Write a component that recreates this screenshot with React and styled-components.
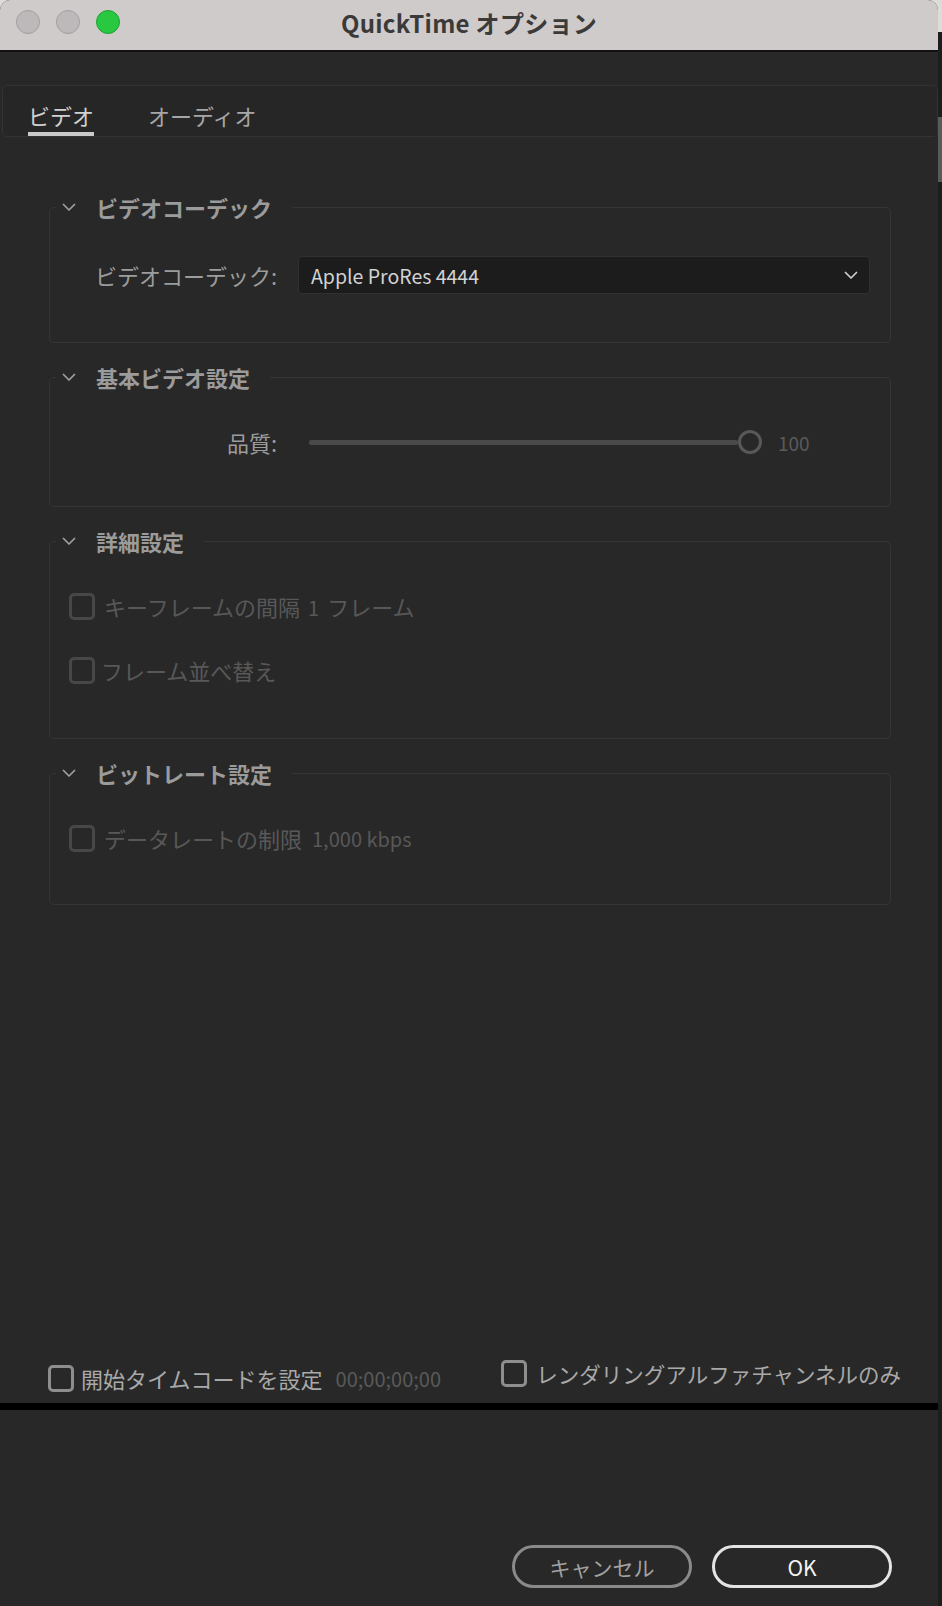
import React from 'react';
import styled, { createGlobalStyle } from 'styled-components';

const GlobalStyle = createGlobalStyle`
  html, body {
    margin: 0;
    padding: 0;
  }
  body {
    background: linear-gradient(to bottom, #dedbdb 0, #dedbdb 32px, #1d1d1d 32px);
    font-family: "Noto Sans CJK JP", "Noto Sans", sans-serif;
  }
`;

const Screen = styled.div`
  display: flex;
  height: 100vh;
`;

const Window = styled.div`
  width: 938px;
  flex: none;
  display: flex;
  flex-direction: column;
  background: #282828;
  border-radius: 10px 10px 0 0;
  overflow: hidden;
`;

const EdgeStrip = styled.div`
  flex: 1;
  display: flex;
  flex-direction: column;
`;

const EdgeMark = styled.div`
  margin-top: 117px;
  height: 65px;
  background: #5a5a5a;
`;

/* title bar */
const TitleBar = styled.div`
  height: 52px;
  flex: none;
  box-sizing: border-box;
  padding: 0 16px 6px 16px;
  display: grid;
  grid-template-columns: 1fr auto 1fr;
  align-items: center;
  background: #cfcbcb;
  border-bottom: 2px solid #121212;
`;

const Lights = styled.div`
  display: flex;
  gap: 16px;
`;

const Light = styled.span`
  width: 24px;
  height: 24px;
  box-sizing: border-box;
  border-radius: 50%;
  background: ${(p) => (p.$on ? '#28c840' : '#bdb9ba')};
  border: 1px solid ${(p) => (p.$on ? '#1fa133' : '#a29e9f')};
`;

const Title = styled.div`
  font-size: 24px;
  font-weight: 700;
  color: #3c3939;
  letter-spacing: 0.3px;
`;

/* tabs */
const Main = styled.div`
  flex: 1;
  display: flex;
  flex-direction: column;
`;

const TabBar = styled.div`
  margin: 33px 0 0 2px;
  padding-left: 25px;
  display: flex;
  gap: 54px;
  border: 1px solid #333;
  border-radius: 5px;
  background: #262626;
`;

const Tab = styled.div`
  padding: 14px 0 2px;
  line-height: 30px;
  font-size: 22px;
  color: ${(p) => (p.$active ? '#d0d0d0' : '#a6a6a6')};
  border-bottom: 4px solid ${(p) => (p.$active ? '#c9c9c9' : 'transparent')};
`;

/* sections */
const Content = styled.div`
  padding: 58px 47px 0 49px;
  display: flex;
  flex-direction: column;
  gap: 22px;
`;

const Section = styled.fieldset`
  margin: 0;
  padding: 0;
  min-inline-size: 0;
  border: 1px solid #353535;
  border-radius: 5px;
`;

const Legend = styled.legend`
  margin-left: 6px;
  padding: 0 20px 0 6px;
  display: flex;
  align-items: center;
  gap: 20px;
  line-height: 24px;
  font-size: 22px;
  font-weight: 700;
  color: #9b9b9b;
`;

const SectionBody = styled.div`
  padding: 37px 20px ${(p) => p.$pb || 48}px 19px;
  display: flex;
  flex-direction: column;
  gap: 32px;
`;

const FieldRow = styled.div`
  display: grid;
  grid-template-columns: 208px 1fr;
  column-gap: 21px;
  align-items: center;
  min-height: ${(p) => p.$h || 32}px;
`;

const Label = styled.div`
  text-align: right;
  font-size: 22px;
  color: #9c9c9c;
`;

const Select = styled.div`
  height: 38px;
  box-sizing: border-box;
  padding: 0 11px 0 12px;
  display: flex;
  align-items: center;
  justify-content: space-between;
  background: #1c1c1c;
  border: 1px solid #303030;
  border-radius: 4px;
  font-size: 19.5px;
  color: #d2d2d2;
`;

const Slider = styled.div`
  display: flex;
  align-items: center;
`;

const Track = styled.div`
  margin-left: 11px;
  width: 429px;
  height: 5px;
  border-radius: 2px;
  background: #4a4a4a;
`;

const Thumb = styled.div`
  width: 24px;
  height: 24px;
  box-sizing: border-box;
  border-radius: 50%;
  border: 3px solid #585858;
  background: #282828;
`;

const SliderValue = styled.span`
  margin-left: 16px;
  font-size: 19px;
  color: #5a5a5a;
`;

const CheckRow = styled.label`
  display: flex;
  align-items: center;
  gap: ${(p) => p.$gap || 9}px;
  min-height: 32px;
  font-size: ${(p) => p.$size || 22}px;
  color: ${(p) => (p.$disabled ? '#585858' : '#a9a9a9')};
`;

const Box = styled.span`
  width: 26px;
  height: 27px;
  flex: none;
  box-sizing: border-box;
  border-radius: 5px;
  border: 3px solid ${(p) => (p.$disabled ? '#474747' : '#8e8e8e')};
`;

const Num = styled.span`
  margin: 0 ${(p) => p.$mr || 0}px 0 ${(p) => p.$ml || 0}px;
  font-size: 20px;
  color: ${(p) => p.$color || 'inherit'};
`;

/* bottom */
const OptionsRow = styled.div`
  padding: 0 37px 9px 48px;
  display: flex;
  justify-content: space-between;
  align-items: flex-start;
`;

const LeftOption = styled.div`
  margin-top: 5px;
`;

const BlackBar = styled.div`
  height: 7px;
  flex: none;
  background: #000;
`;

const Footer = styled.div`
  height: 196px;
  flex: none;
  box-sizing: border-box;
  padding: 0 46px 18px 0;
  display: flex;
  justify-content: flex-end;
  align-items: flex-end;
  gap: 20px;
`;

const Button = styled.button`
  width: 180px;
  height: 43px;
  border-radius: 22px;
  background: transparent;
  font-family: inherit;
  font-size: 21px;
  font-weight: 400;
  color: ${(p) => (p.$primary ? '#f4f4f4' : '#a2a2a2')};
  border: 3px solid ${(p) => (p.$primary ? '#e4e4e4' : '#8a8a8a')};
  padding: 0;
`;

const Chevron = ({ color = '#a0a0a0' }) => (
  <svg width="14" height="9" viewBox="0 0 14 9" fill="none">
    <path d="M1.5 1.5 L7 7 L12.5 1.5" stroke={color} strokeWidth="1.7" strokeLinecap="round" strokeLinejoin="round" />
  </svg>
);

const Check = ({ disabled, gap, size, children }) => (
  <CheckRow $disabled={disabled} $gap={gap} $size={size}>
    <Box $disabled={disabled} />
    {children}
  </CheckRow>
);

export default function App() {
  return (
    <Screen>
      <GlobalStyle />
      <Window>
        <TitleBar>
          <Lights>
            <Light />
            <Light />
            <Light $on />
          </Lights>
          <Title>QuickTime オプション</Title>
          <span />
        </TitleBar>

        <Main>
          <TabBar>
            <Tab $active>ビデオ</Tab>
            <Tab>オーディオ</Tab>
          </TabBar>

          <Content>
            <Section>
              <Legend>
                <Chevron />
                ビデオコーデック
              </Legend>
              <SectionBody>
                <FieldRow $h={38}>
                  <Label>ビデオコーデック:</Label>
                  <Select>
                    Apple ProRes 4444
                    <Chevron color="#cfcfcf" />
                  </Select>
                </FieldRow>
              </SectionBody>
            </Section>

            <Section>
              <Legend>
                <Chevron />
                基本ビデオ設定
              </Legend>
              <SectionBody>
                <FieldRow>
                  <Label>品質:</Label>
                  <Slider>
                    <Track />
                    <Thumb />
                    <SliderValue>100</SliderValue>
                  </Slider>
                </FieldRow>
              </SectionBody>
            </Section>

            <Section>
              <Legend>
                <Chevron />
                詳細設定
              </Legend>
              <SectionBody $pb={52}>
                <Check disabled>
                  <span>
                    キーフレームの間隔
                    <Num $ml={8} $mr={8}>1</Num>
                    フレーム
                  </span>
                </Check>
                <Check disabled gap={6}>
                  フレーム並べ替え
                </Check>
              </SectionBody>
            </Section>

            <Section>
              <Legend>
                <Chevron />
                ビットレート設定
              </Legend>
              <SectionBody $pb={50}>
                <Check disabled>
                  データレートの制限
                  <Num $ml={1}>1,000 kbps</Num>
                </Check>
              </SectionBody>
            </Section>
          </Content>
        </Main>

        <OptionsRow>
          <LeftOption>
            <Check gap={7} size={22}>
              開始タイムコードを設定
              <Num $ml={6} $color="#5a5a5a">00;00;00;00</Num>
            </Check>
          </LeftOption>
          <Check size={21.5}>レンダリングアルファチャンネルのみ</Check>
        </OptionsRow>
        <BlackBar />

        <Footer>
          <Button>キャンセル</Button>
          <Button $primary>OK</Button>
        </Footer>
      </Window>
      <EdgeStrip>
        <EdgeMark />
      </EdgeStrip>
    </Screen>
  );
}
